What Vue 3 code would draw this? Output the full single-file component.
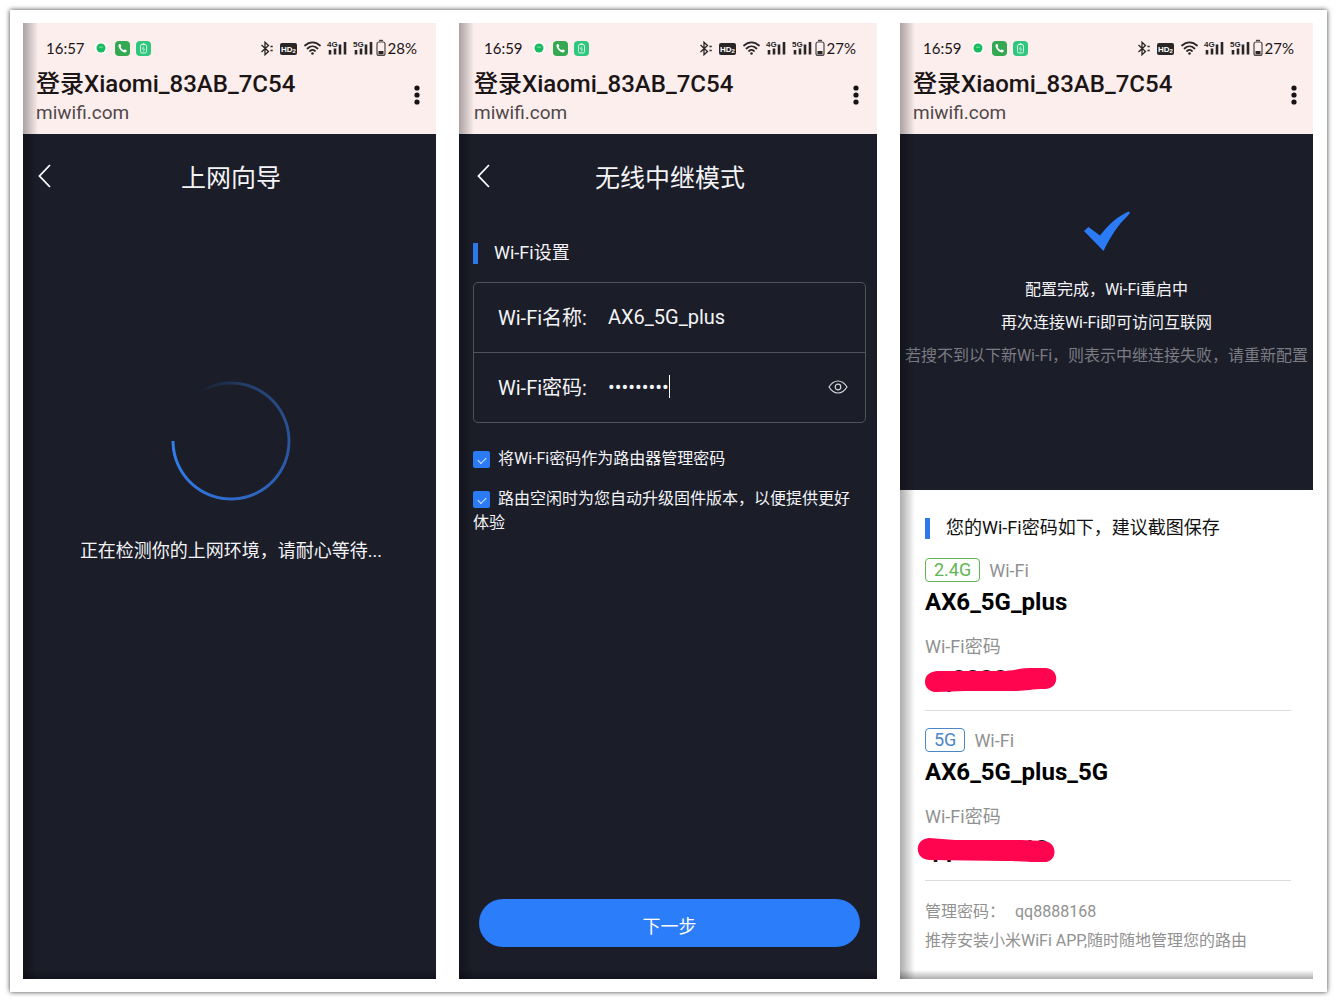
<script setup>
import { ref } from 'vue'

const phones = [
  { id: 'detect', time: '16:57', battery: '28%' },
  { id: 'relay', time: '16:59', battery: '27%' },
  { id: 'done', time: '16:59', battery: '27%' },
]

const networks = [
  { band: '2.4G', tone: 'green', name: 'AX6_5G_plus', mark: 'M12 3 L80 3 C94 2 94 0 106 0 L120 0 C135 0 135 21 120 21 C105 21 102 23 88 23 L40 23 L12 24 C-4 24 -4 4 12 3 Z' },
  { band: '5G', tone: 'blue', name: 'AX6_5G_plus_5G', mark: 'M4 0 L30 2 L96 2 L119 3 C133 4 133 24 119 24 C100 24 96 23 80 23 L4 22 C-11 21 -11 1 4 0 Z' },
]

const ssid = ref('AX6_5G_plus')
const password = ref('qq8888168')
const showPassword = ref(false)
const useAsAdmin = ref(true)
const autoUpgrade = ref(true)
</script>

<template>
  <main class="frame">
    <section v-for="phone in phones" :key="phone.id" class="phone" :class="phone.id">
      <header class="browser">
        <div class="status">
          <span class="time">{{ phone.time }}</span>
          <svg class="notices" width="56" height="16" viewBox="0 0 56 16">
            <circle cx="6" cy="8" r="6" fill="#fff" />
            <circle cx="6" cy="8" r="4.5" fill="#19bb60" />
            <path d="M4 7.2h4" stroke="#7fe0a6" stroke-width="1" />
            <rect x="20" y="1" width="15" height="15" rx="4" fill="#35a852" />
            <path d="M24 4.3c.9-.9 1.6-.2 2.2 1.1.3.8-.8 1.1-.5 1.9.6 1.3 1.5 2.2 2.7 2.8.8.3 1.1-.8 1.9-.5 1.4.5 2 1.3 1.1 2.2-1.2 1.200-3.500.6-5.600-1.500s-3-4.700-1.800-6z" fill="#fff" />
            <rect x="41" y="1" width="15" height="15" rx="4" fill="#2fc67d" />
            <rect x="45.5" y="4.5" width="6" height="8.5" rx="1.5" fill="none" stroke="#d6f7e6" />
            <path d="M47.5 3.500h2M48.800 6.500l-1.300 2.500h2l-1.200 2.500" fill="none" stroke="#d6f7e6" stroke-width=".8" />
          </svg>
          <svg class="signals" width="126" height="18" viewBox="0 0 126 18">
            <g fill="none" stroke="#2a2526" stroke-width="1.300">
              <path d="M1.500 6l7 6.500-3.500 3.300V3.200l3.500 3.300-7 6.500" />
              <path d="M10.500 7.500h3M10.500 11.500h3" stroke-width="1.500" stroke-dasharray="2.200 4" />
            </g>
            <rect x="20" y="4" width="17" height="12" rx="2" fill="#2a2526" />
            <text x="21" y="13.300" class="hd">HD</text>
            <text x="32.500" y="13.500" class="hd-sub">2</text>
            <g fill="none" stroke="#2a2526" stroke-width="1.800" stroke-linecap="round">
              <path d="M45 6.500c4.500-4.300 10.500-4.300 15 0M47.500 9.500c3-2.800 7-2.800 10 0M50 12c1.500-1.300 3.500-1.300 5 0" />
            </g>
            <circle cx="52.500" cy="14.500" r="1.300" fill="#2a2526" />
            <g v-for="(gen, i) in ['4G', '5G']" :key="gen" :transform="`translate(${67 + i * 26} 0)`">
              <text x="0" y="8" class="gen">{{ gen }}</text>
              <path d="M3 15.500v-4.500M8 15.500v-6M13 15.500v-10M18 15.500v-12.500" stroke="#2a2526" stroke-width="2.600" />
            </g>
            <rect x="117" y="3" width="8" height="13.500" rx="2" fill="none" stroke="#4a4445" stroke-width="1.200" />
            <path d="M119 1.500h4" stroke="#4a4445" stroke-width="1.400" />
            <rect x="118.500" y="12" width="5" height="3.500" fill="#2a2526" />
          </svg>
          <span class="percent">{{ phone.battery }}</span>
        </div>
        <div class="site">
          <div>
            <h1>登录Xiaomi_83AB_7C54</h1>
            <p>miwifi.com</p>
          </div>
          <button class="more" type="button" aria-label="更多">
            <svg width="6" height="20" viewBox="0 0 6 20" fill="#171314">
              <circle cx="3" cy="3" r="2.600" /><circle cx="3" cy="10" r="2.600" /><circle cx="3" cy="17" r="2.600" />
            </svg>
          </button>
        </div>
      </header>

      <div v-if="phone.id !== 'done'" class="screen">
        <div class="nav">
          <button class="back" type="button" aria-label="返回">
            <svg width="14" height="24" viewBox="0 0 14 24" fill="none" stroke="#fff" stroke-width="1.800">
              <path d="M13 1L2.500 12 13 23" />
            </svg>
          </button>
          <h2>{{ phone.id === 'detect' ? '上网向导' : '无线中继模式' }}</h2>
        </div>

        <template v-if="phone.id === 'detect'">
          <div class="spinner" />
          <p class="waiting">正在检测你的上网环境，请耐心等待...</p>
        </template>

        <form v-else class="wifi-form" @submit.prevent>
          <h3 class="section-title">Wi-Fi设置</h3>
          <div class="fields">
            <div class="field">
              <label for="ssid">Wi-Fi名称:</label>
              <input id="ssid" v-model="ssid" type="text" />
            </div>
            <div class="field">
              <label for="password">Wi-Fi密码:</label>
              <input id="password" v-model="password" :type="showPassword ? 'text' : 'password'" />
              <span class="caret" />
              <button class="eye" type="button" aria-label="显示密码" @click="showPassword = !showPassword">
                <svg width="20" height="14" viewBox="0 0 20 14" fill="none" stroke="#d5d6da" stroke-width="1.200">
                  <path d="M1 7c5-8 13-8 18 0-5 8-13 8-18 0z" />
                  <circle cx="10" cy="7" r="2.800" />
                </svg>
              </button>
            </div>
          </div>
          <label class="check"><input v-model="useAsAdmin" type="checkbox" />将Wi-Fi密码作为路由器管理密码</label>
          <label class="check"><input v-model="autoUpgrade" type="checkbox" />路由空闲时为您自动升级固件版本，以便提供更好体验</label>
          <button class="next" type="submit">下一步</button>
        </form>
      </div>

      <template v-else>
        <div class="result">
          <svg width="46" height="40" viewBox="0 0 46 40">
            <path d="M0 20l4.500-4L16 24.500C24 14 34 5 44.500 0.500L46 1.500C45.500 2.500 45 3.500 44 4.500 33 15 27 25 19.500 40z" fill="#2b7bf6" />
          </svg>
          <p>配置完成，Wi-Fi重启中</p>
          <p>再次连接Wi-Fi即可访问互联网</p>
          <p class="hint">若搜不到以下新Wi-Fi，则表示中继连接失败，请重新配置</p>
        </div>
        <div class="summary">
          <h3 class="section-title">您的Wi-Fi密码如下，建议截图保存</h3>
          <article v-for="net in networks" :key="net.band" class="network">
            <div class="band"><span class="tag" :class="net.tone">{{ net.band }}</span>Wi-Fi</div>
            <strong class="name">{{ net.name }}</strong>
            <p class="label">Wi-Fi密码</p>
            <div class="secret">
              <strong>{{ password }}</strong>
              <svg width="132" height="24" viewBox="0 0 132 24"><path :d="net.mark" fill="#ff054f" /></svg>
            </div>
          </article>
          <p class="note">管理密码：<span>{{ password }}</span></p>
          <p class="note">推荐安装小米WiFi APP,随时随地管理您的路由</p>
        </div>
      </template>
    </section>
  </main>
</template>

<style>
body {
  background: #fff;
}
#app {
  padding: 10px;
}
</style>

<style scoped>
* {
  box-sizing: border-box;
}
h1, h2, h3, p {
  margin: 0;
  font-weight: 400;
}
button {
  display: flex;
  align-items: center;
  justify-content: center;
  padding: 0;
  border: 0;
  background: none;
  font: inherit;
  cursor: pointer;
}
.frame {
  display: grid;
  grid-template-columns: 413fr 418fr 413fr;
  gap: 23px;
  min-height: calc(100vh - 20px);
  padding: 13px 14px 13px 13px;
  background: #fff;
  box-shadow: 0 0 5px rgba(0, 0, 0, .75);
  font-family: Roboto, "Noto Sans CJK SC", sans-serif;
}
.phone {
  position: relative;
  display: flex;
  flex-direction: column;
  min-width: 0;
  overflow: hidden;
}
/* dark edge along the left and bottom of every phone */
.phone::after {
  content: '';
  position: absolute;
  inset: 0;
  background:
    linear-gradient(to right, rgba(0, 0, 0, .32), rgba(0, 0, 0, .2) 6px, transparent 15px),
    linear-gradient(to top, rgba(0, 0, 0, .32), transparent 9px);
  pointer-events: none;
}

.browser {
  height: 111px;
  padding: 15px 16px 0 13px;
  background: #fbeeed;
  color: #1b1516;
}
.relay .browser {
  padding: 15px 18px 0 15px;
}
.status {
  display: flex;
  align-items: center;
  height: 20px;
  padding: 0 3px 0 10px;
  font-family: Lato, sans-serif;
  font-size: 15px;
}
.notices {
  margin-left: 10px;
}
.signals {
  margin-left: auto;
  margin-right: 2px;
}
.hd {
  fill: #fff;
  font: bold 8px "Liberation Sans", sans-serif;
}
.hd-sub {
  fill: #fff;
  font: bold 6px "Liberation Sans", sans-serif;
}
.gen {
  fill: #2a2526;
  font: bold 8px "Liberation Sans", sans-serif;
}
.site {
  display: flex;
  align-items: flex-start;
  justify-content: space-between;
  margin-top: 11px;
}
.more {
  margin-top: 16px;
}
.site h1 {
  font-size: 24px;
  font-weight: 500;
  line-height: 30px;
}
.site p {
  margin-top: 2px;
  color: #51484a;
  font-size: 19px;
  line-height: 24px;
}

.screen {
  display: flex;
  flex: 1;
  flex-direction: column;
  padding: 29px 11px 32px 14px;
  background: #1b1d29;
  color: #f4f4f6;
}
.nav {
  display: grid;
  grid-template-columns: 14px 1fr 14px;
  height: 32px;
}
.nav h2 {
  font-size: 25px;
  line-height: 32px;
  text-align: center;
}
.back {
  height: 26px;
}
.relay .nav {
  padding: 0 2px 0 3px;
}
.spinner {
  position: relative;
  align-self: center;
  width: 120px;
  height: 120px;
  margin-top: 186px;
  border-radius: 50%;
  background: conic-gradient(from 270deg, transparent 55deg, #24406f 110deg, #2a559b 180deg, #2f69c6 260deg, #3280f0 360deg);
  mask: radial-gradient(closest-side, transparent 56px, #000 57px, #000 59px, transparent 60px);
}
.waiting {
  margin-top: 38px;
  font-size: 18px;
  line-height: 24px;
  text-align: center;
}

.wifi-form {
  display: flex;
  flex: 1;
  flex-direction: column;
  margin-top: 47px;
}
.section-title {
  display: flex;
  align-items: center;
  gap: 16px;
  height: 22px;
  font-size: 18px;
  line-height: 22px;
}
.section-title::before {
  content: '';
  width: 5px;
  height: 21px;
  background: #2f78e8;
}
.fields {
  margin-top: 18px;
  border: 1px solid #50525c;
  border-radius: 5px;
}
.field {
  display: flex;
  align-items: center;
  height: 69px;
  padding: 0 17px 2px 24px;
  font-size: 20px;
}
.field + .field {
  height: 70px;
  border-top: 1px solid #50525c;
}
.field label {
  width: 110px;
}
.field input {
  field-sizing: content;
  min-width: 0;
  padding: 0;
  border: 0;
  outline: 0;
  background: none;
  color: inherit;
  font: inherit;
}
.caret {
  width: 1px;
  height: 23px;
  background: #fff;
}
.eye {
  margin-left: auto;
}
.check {
  margin-top: 24px;
  padding-right: 6px;
  font-size: 16px;
  line-height: 24px;
}
.check + .check {
  margin-top: 16px;
}
.check input {
  appearance: none;
  display: inline-grid;
  place-items: center;
  width: 17px;
  height: 17px;
  margin: 4px 8px 0 0;
  border-radius: 2px;
  background: #3a3c48;
  vertical-align: top;
}
.check input:checked {
  background: #2b7bf6;
}
.check input:checked::after {
  content: '';
  width: 7px;
  height: 4px;
  border: solid #dbe8ff;
  border-width: 0 0 1px 1px;
  transform: rotate(-45deg);
}
.next {
  height: 48px;
  margin: auto 6px 0;
  padding-top: 3px;
  border-radius: 24px;
  background: #2b7dfa;
  color: #fff;
  font-size: 18px;
}

.result {
  display: flex;
  flex-direction: column;
  align-items: center;
  height: 356px;
  padding-top: 77px;
  background: #1b1d29;
  color: #f4f4f6;
  font-size: 16px;
  line-height: 33px;
  white-space: nowrap;
}
.result svg {
  flex: none;
  margin-bottom: 22px;
}
.hint {
  color: #7b7c83;
}
.summary {
  flex: 1;
  padding: 27px 22px 23px 25px;
  background: #fff;
  color: #111;
}
.network {
  padding: 17px 0 18px;
  border-bottom: 1px solid #dcdcdc;
}
.section-title + .network {
  padding-top: 19px;
}
.band {
  display: flex;
  align-items: center;
  gap: 9px;
  height: 24px;
  color: #919191;
  font-size: 18px;
}
.tag {
  height: 24px;
  padding: 0 8px;
  border: 1px solid;
  border-radius: 4px;
  line-height: 22px;
}
.green {
  color: #62b553;
}
.blue {
  color: #4b86c6;
}
.name {
  display: block;
  margin-top: 5px;
  color: #000;
  font-size: 24px;
  line-height: 30px;
}
.label {
  margin-top: 18px;
  color: #919191;
  font-size: 18px;
  line-height: 24px;
}
.secret {
  position: relative;
  height: 27px;
  margin-top: 6px;
  font-size: 24px;
  line-height: 28px;
}
.secret svg {
  position: absolute;
  top: 3px;
  left: 0;
  overflow: visible;
}
.note {
  color: #919191;
  font-size: 16px;
  line-height: 29px;
}
.network + .note {
  margin-top: 16px;
}
.note span {
  margin-left: 10px;
}
</style>
